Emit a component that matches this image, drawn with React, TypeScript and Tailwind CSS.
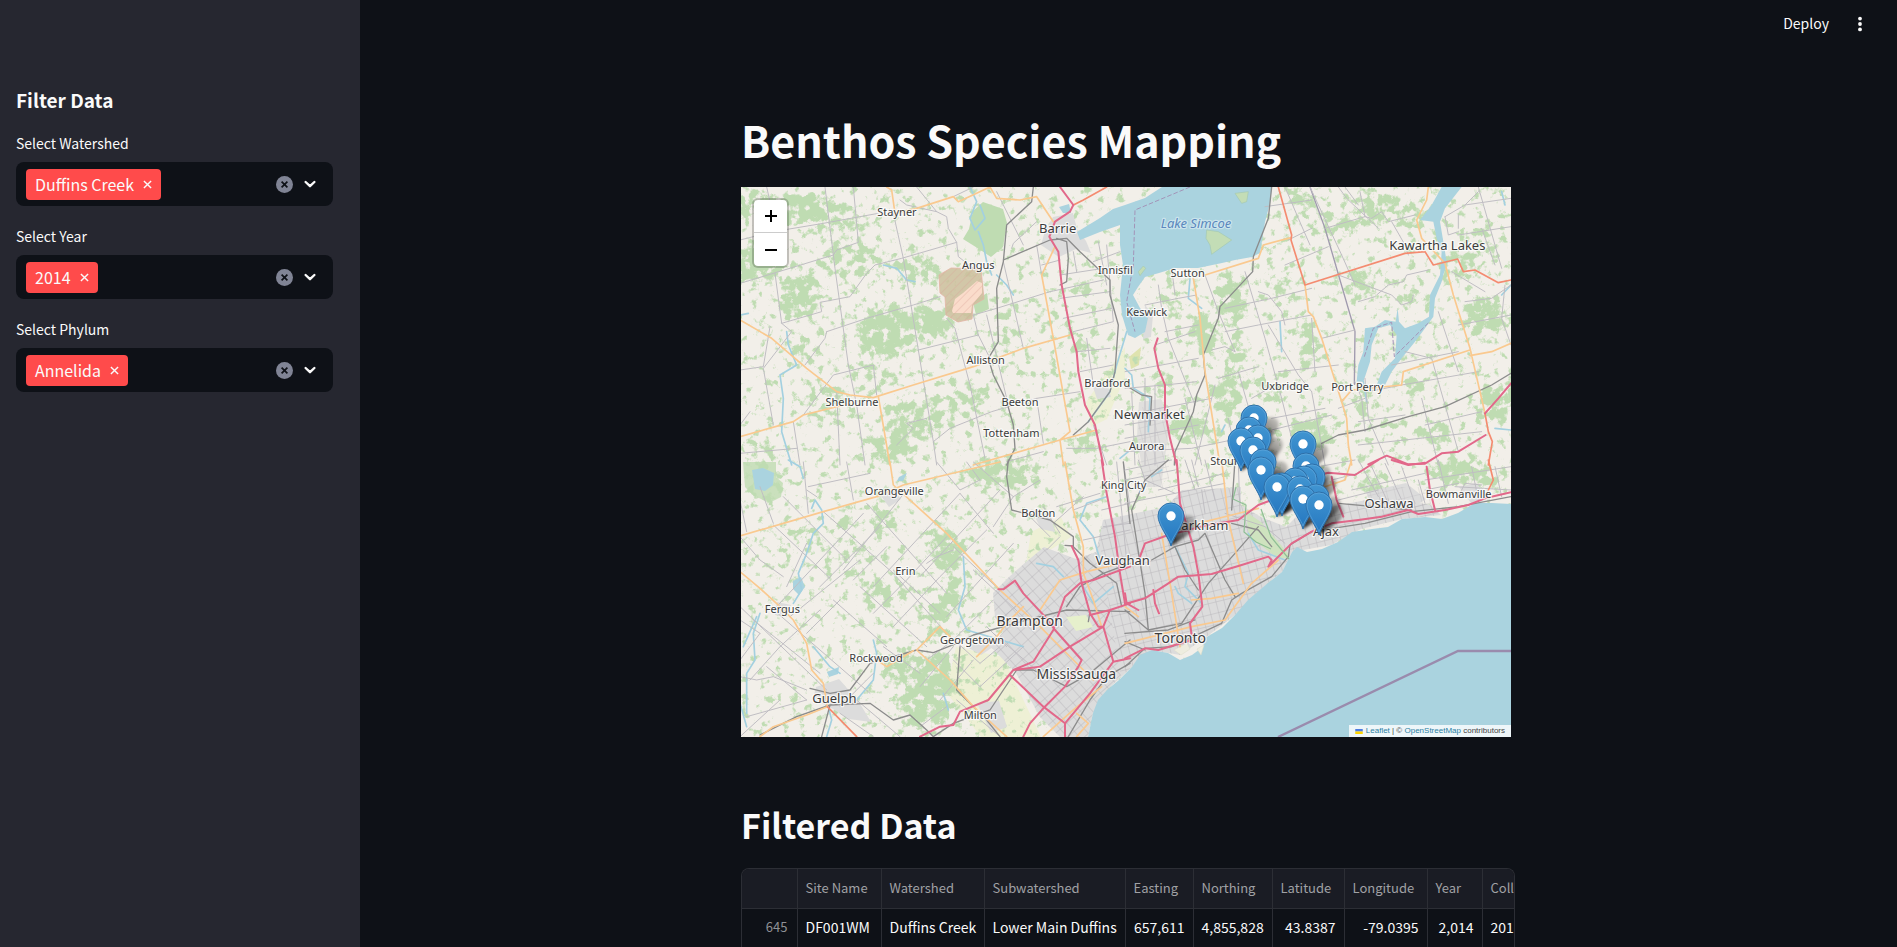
import React from "react";

/* ---------- Map data: four tiles, each drawn on a 1170 x 840 grid ---------- */

type TileId = "nw" | "ne" | "sw" | "se";

const tileOrigin: Record<TileId, [number, number]> = {
  nw: [-1, -2],
  ne: [384, -2],
  sw: [-1, 273],
  se: [384, 273],
};

type Roads = { minor: string; primary: string; trunk: string; motorway: string; rail: string; river: string };

const roads: Record<TileId, Roads> = {
  nw: {
    minor:
      "M0 295L110 262 280 210 290 195 355 172 340 6M0 165L100 140 250 115 415 85M255 6L285 250 325 540 350 660 375 840M105 265L125 415 155 440 70 550 100 720M125 415L245 380 240 352 330 335 380 265 405 240 485 220 650 172 625 130 620 95 590 80 530 6M460 85L490 220 535 495 580 770 590 840M260 440L380 400 520 360 600 335M260 440L255 460 195 540M650 172L655 215 700 250M535 495L715 450M620 400L645 430 690 600 735 820M700 390L715 450 760 540M700 390L770 370 930 320 1090 285M790 230L850 490M770 20L850 180M815 190L820 175 890 110M580 770L630 730 755 680 890 640 1020 620M890 640L910 775M1100 180L1120 410 1000 440M1075 170L1100 300M960 270L1090 250M190 690L280 570 400 540 410 630M0 555L70 545 90 425M80 6L90 50M160 710L180 840M0 805L170 790M1010 500L1110 490M1020 560L1120 540M905 240L960 225M890 180L905 270M470 780L520 730 500 715 560 700M30 680L0 720M290 620L300 840M1040 460L1060 600M980 790L1070 790 1170 770M1060 720L1100 840M740 390L800 640M480 45L500 60 590 80M800 830L910 800M700 6L640 35M1140 200L1060 230M1000 200L1010 260M960 340L1110 320M970 400L1115 370",
    primary:
      "M440 6L455 15 465 85 530 70 640 35 655 50 750 6 770 40 840 45 890 35 940 110M945 185L905 270 940 460 990 740 960 765 970 840M0 405L95 460 200 550 290 620 330 630 400 638 520 600 700 545 850 490 990 450M0 755L160 710 190 690 330 655M415 635L450 840M1070 735L960 765 700 840",
    trunk: "M1000 60L1030 45 1100 6",
    motorway:
      "M960 6L1000 60 990 80 945 110 928 155 955 200 965 300 990 430 1010 500 1015 560 1035 660 1065 720 1090 840",
    rail:
      "M880 6L875 50 800 120 790 230 770 310 775 470 745 520 760 570 800 650 820 720 825 790 800 840M790 225L930 165 980 160 1020 200 1110 285 1110 330 1135 420 1125 560 1110 620 1045 710 1000 750M950 160L980 170 985 220 980 290 960 300",
    river:
      "M690 6L710 50 690 100 705 135 735 100 720 60M715 140L730 180 740 230 755 270M430 240L470 250 500 285 525 290M140 440L145 480 170 540 120 570 130 640 125 740 155 840M0 390L25 385M1160 440L1130 540 1110 620 1045 710M1165 800L1140 820M770 270L800 300 820 330",
  },
  ne: {
    minor:
      "M555 6L650 210 690 300M480 240L610 185M490 165L560 130M600 130L720 95M720 95L705 20M700 60L660 6M720 95L740 100 770 80 790 110 870 90M420 65L560 45M640 270L800 330 830 360 860 350 865 330M755 330L790 300 835 290 845 270 910 255M750 335L700 350M100 300L110 370 130 460 210 660M140 250L150 330M60 360L160 340 215 330M240 270L280 380 330 500M360 260L420 460 470 640 520 840M300 370L440 340 560 310M300 440L400 420 560 390M260 495L300 485 330 500M590 460L690 435M400 320L430 330 470 380 480 420M430 420L520 570 560 620M460 560L640 540M380 640L450 600M120 440L220 420M90 480L210 440M280 580L400 545M640 670L720 640M720 580L730 700 790 840M690 590L710 640 720 740M840 500L920 520 1000 800M940 380L1000 560M890 640L940 840M960 95L1020 60 1060 20M960 95L970 150 1000 140M1060 6L1130 250M1000 150L1158 125M1000 130L1000 90M1158 300L1100 340 1020 350M1000 420L1158 390M1020 60L1158 40M1140 300L1130 400 1158 480M800 540L1000 500M830 600L1060 560M730 620L830 600M440 700L600 670M420 740L620 690M560 620L600 840M900 720L1070 680M700 780L1070 740M0 560L220 520M0 610L120 600 215 590M0 690L260 640M0 760L220 720M0 800L200 790 440 740M60 580L60 840M20 620L30 840M90 600L90 840M180 640L230 840M0 720L120 700M310 700L340 840M340 560L380 700M210 840L270 600M560 400L570 560M800 110L840 180 850 210M640 6L665 40 760 130M480 6L520 100 555 180M1070 130L1110 240M980 260L1080 320M700 710L840 690",
    primary:
      "M240 270L400 220 415 180 498 158M540 300L550 380 565 395 590 460 650 650 665 700 670 780 680 840M650 650L680 615 830 600 835 560 1035 495M1035 512L1100 500 1158 475M205 280L225 400 240 560 285 840M910 6L905 45 875 105 890 160 960 235 985 330 1035 490 1080 685",
    trunk:
      "M460 6L500 150 498 165 540 300 840 205 900 200 925 240 998 222 1015 260 1050 255 1120 293 1158 285M1080 685L1090 740 1102 770 1090 840",
    motorway:
      "M98 460L88 490 100 550 120 600 120 680 135 760 155 840M730 838L785 812 850 838 900 836 950 805 1000 800 1082 750M1158 595L1120 640 1080 685",
    rail:
      "M440 6L430 100 385 215 383 260 285 365 280 400 235 510 240 570 215 630 205 680 150 800 148 840M1158 565L1100 600 960 665 850 695 720 735 640 750 590 775M0 600L50 630 80 635 75 720",
    river:
      "M195 280L190 340 230 370M0 550L20 570 25 610 75 640 70 740M715 590L725 650M465 410L470 500M1158 300L1130 330M1130 20L1140 60M1110 730L1158 735M300 720L290 740",
  },
  sw: {
    minor:
      "M190 6L205 160M340 120L320 6M100 195L270 355M205 80L390 40M250 155L460 340 620 520 720 610M130 110L320 300M0 230L60 300 130 350M380 130L620 400M500 90L310 330M590 6L660 90 720 60M660 100L400 380M660 100L760 220M780 90L540 350M740 210L600 350 460 500M620 230L500 360 400 460M820 250L620 470M640 260L800 410M700 330L860 480M760 420L640 540 560 600M370 160L240 300 110 440M200 250L140 380M0 440L260 690M40 480L240 640M90 440L390 700M150 470L360 300M200 520L300 420M280 420L440 560M360 380L560 560M460 330L600 460M240 380L420 200M440 260L340 360M120 560L240 450M0 480L60 520M60 520L0 600M120 560L30 660M80 620L200 720M0 650L50 660 100 650 200 690M20 770L200 720M120 720L0 830M300 760L400 830M350 720L480 830M400 640L300 740M430 560L540 640M640 560L540 680M640 600L720 680M620 740L540 800M700 600L600 720M650 720L780 830M720 610L780 560M780 480L870 400M740 500L800 560M920 270L960 230M910 140L960 220M860 160L930 230M940 190L1030 110M950 140L1080 100M700 6L820 110 760 200M820 110L900 60M1000 150L1080 120M850 560L720 680M760 520L900 640M1085 150L1170 130M1090 200L1170 190M1030 240L1170 210M1130 6L1160 300M1150 6L1170 140M560 310L590 290 640 270M60 80L100 190M720 60L680 6M0 120L20 215M200 90L230 110",
    primary:
      "M0 335L60 385 120 440 160 480 200 550 215 630 250 670 262 740 200 765 100 800 60 830M0 228L250 155 410 110 490 75 780 6M450 6L460 75 620 220 780 390 900 500 1000 600 1060 660M530 570L600 500 630 530M530 570L630 660 700 740 800 830M520 572L440 620 410 600M975 6L1000 150 1030 260 1030 340 1060 420 1085 500M900 450L960 360 1040 335 1140 310M850 440L800 490 770 530 710 590M1085 680L1000 750 910 830M1010 760L1045 790 1010 830",
    trunk: "M262 740L350 830",
    motorway:
      "M775 388L790 388 825 362 850 400 915 470 945 510 1025 600 1015 620 975 680 910 745 870 790 850 830M540 830L600 800 640 795 660 755 745 720 820 630 880 605 940 510 960 450 975 410 1020 370 1060 360 1170 320M820 630L900 620 990 560 1090 500 1110 450 1170 430M1085 0L1100 100 1125 230 1140 340 1155 430M995 258L1015 300 1025 370 1050 460 1075 500 1090 500 1120 605 1050 700 975 790 975 830M810 645L910 740 975 790M1120 605L1170 595M1050 465L1110 450",
    rail:
      "M805 0L800 50 815 150 930 180 1000 230 1000 260 1050 310 1130 370 1145 440M975 256L1000 258M210 685L270 700 330 690 390 610 530 570 580 578 650 550 700 525 860 480 980 450 1170 455M660 560L650 690 700 740 740 780 780 830M60 825L170 770 270 735 245 830M270 735L390 730 460 780 510 765 560 810 580 830M980 440L1020 380 1090 340 1170 310M580 830L640 790 750 750 830 630 880 630 980 680 1050 640 1170 540M985 830L1050 720 1100 650 1170 610M1150 6L1170 190M1045 485L1050 455",
    river:
      "M145 0L180 20 190 55M215 145L225 120 245 150 250 190 220 220 200 280 175 340 185 390 160 430M60 460L40 520 45 600 20 640 20 760M50 470L10 560M220 560L270 620 300 640M400 540L410 580 400 660 350 720M670 290L675 380 655 450 680 510 850 560M1100 110L1040 130 1020 180 1060 230 1080 300M265 740L275 780 260 830M610 700L625 750M0 730L20 800M890 310L940 320 970 350M1030 380L1060 430 1120 380",
  },
  se: {
    minor:
      "M0 60L150 30M0 130L150 100 300 70M40 0L60 60 150 100M180 0L210 90M200 0L220 80M240 0L270 120M230 90L240 160M300 160L420 200 480 250M100 90L300 40M0 30L140 0M340 10L345 160M580 20L690 0M620 60L700 40M700 0L760 110M740 20L790 130M780 10L830 120M830 20L870 130M880 60L900 130M680 90L900 40M640 120L760 90M900 60L1158 20M940 0L970 130M990 80L1158 90M1000 110L1020 70 1070 75M600 100L620 170M1040 20L1060 120M1110 20L1130 110M900 90L1000 70",
    primary:
      "M0 550L200 500 300 480 380 370 460 300M110 220L140 400 165 560M290 0L310 180 355 370M200 420L260 415 340 400M180 200L320 165 400 145M680 0L660 60 600 80M0 440L40 470",
    trunk: "M1090 0L1105 60 1090 90",
    motorway:
      "M0 432L60 415 130 370 160 350 260 342 350 315 430 290 440 300 430 320 500 250 560 215 620 190 700 180 770 170 850 150 880 162 960 150 1030 135 1080 115 1158 97M155 0L165 130 205 260 220 340 232 440 195 490 200 525M0 595L60 565 100 570 200 540M45 290L60 250 130 225 250 195 340 180 400 135 440 120 560 50 610 38 690 45 760 0M620 50L635 120 655 170M905 20L915 90 930 150M85 390L90 430 102 460M800 0L850 15 900 8M0 400L5 430 40 450",
    rail:
      "M0 450L70 510 170 490 250 370 330 280 400 200M0 620L60 565 140 560 290 490 320 420 350 400 440 350 490 290 495 255 560 215 720 190 860 155 1000 140 1158 110M80 300L150 260 220 240 240 220 300 360 330 410M320 190L400 210 440 260M130 0L60 60 20 150 60 400 70 510M0 520L130 510 210 480M640 130L860 150M150 260L180 330 220 390M0 545L60 570M330 0L320 150",
    river: "M150 260L190 340 180 380 230 430M150 380L160 400 200 430M370 220L400 270 480 300M80 50L110 30M520 30L560 100",
  },
};

const lakeOntario =
  "M347 550L352 526 357 513 366 503 378 493 391 480 399 468 411 463 427 466 439 473 451 468 462 460 464 451 481 441 494 428 507 413 527 396 541 385 551 365 556 360 566 365 581 362 597 355 611 345 631 342 647 340 661 332 684 330 701 332 717 326 734 316 751 316 770 317V550Z";

const lakeSimcoe =
  "M531 0L529 16 524 35 519 66 511 70 494 73 481 76 457 81 434 81 418 86 404 90 397 100 392 108 399 121 407 131 404 145 394 151 387 148 381 128 379 108 382 78 379 58 379 38 359 45 339 53 336 45 359 31 372 22 384 18 404 11 421 0Z";

const urban =
  "M303 360L285 375 268 390 252 406 254 430 262 445 250 460 275 486 299 530 319 550H347L352 526 366 503 391 480 411 463 439 468 464 451 494 428 527 396 541 385 551 365 590 358 620 342 661 332 700 328 690 318 640 310 600 318 560 325 545 340 520 330 500 318 500 300 470 302 441 303 425 320 400 325 362 333 355 365 335 372Z";

/* Woodland density: cx, cy, rx, ry, weight */
const woods: [number, number, number, number, number][] = [
  [20, 20, 36, 14, 0.8], [66, 22, 34, 16, 0.9], [14, 78, 30, 18, 0.9], [58, 108, 20, 24, 0.9],
  [110, 72, 38, 16, 0.6], [100, 38, 26, 14, 0.6], [145, 145, 30, 26, 1], [192, 134, 24, 16, 1],
  [175, 82, 24, 14, 0.7], [176, 232, 34, 22, 0.7], [150, 262, 26, 16, 0.8], [90, 215, 26, 18, 0.5],
  [228, 214, 20, 14, 0.7], [266, 150, 8, 20, 0.7], [340, 158, 10, 12, 0.9], [340, 102, 9, 6, 1],
  [343, 256, 12, 8, 1], [270, 120, 12, 10, 0.6], [130, 190, 24, 12, 0.5], [20, 265, 14, 20, 0.5],
  [490, 112, 14, 22, 1], [462, 146, 14, 22, 0.9], [494, 165, 8, 26, 0.9], [567, 158, 8, 26, 1],
  [620, 98, 16, 14, 0.8], [637, 22, 28, 14, 0.8], [560, 14, 16, 9, 0.9], [592, 38, 26, 12, 0.6],
  [675, 30, 18, 14, 0.5], [744, 130, 22, 18, 0.9], [717, 80, 18, 16, 0.6], [667, 110, 16, 10, 0.6],
  [674, 198, 14, 10, 0.8], [624, 218, 10, 10, 1], [450, 240, 26, 12, 1], [486, 208, 16, 20, 0.9],
  [572, 246, 22, 14, 1], [754, 216, 18, 18, 1], [694, 245, 18, 12, 0.8], [430, 115, 12, 12, 0.6],
  [260, 286, 36, 14, 1], [206, 363, 18, 22, 0.9], [212, 406, 12, 18, 1], [196, 433, 10, 20, 1],
  [199, 490, 18, 26, 1], [165, 482, 22, 16, 0.8], [184, 516, 26, 24, 1], [142, 333, 14, 18, 0.7],
  [102, 333, 10, 10, 0.8], [139, 406, 28, 12, 0.7], [110, 370, 24, 16, 0.4], [60, 350, 30, 20, 0.3],
  [717, 284, 30, 12, 1], [632, 296, 18, 10, 0.8], [740, 55, 20, 24, 0.4], [540, 100, 16, 20, 0.4],
  [524, 200, 22, 12, 0.5], [640, 240, 14, 8, 0.5], [740, 290, 26, 12, 0.5], [60, 165, 20, 14, 0.5],
  [22, 298, 24, 14, 0.4], [310, 130, 20, 14, 0.3], [420, 200, 12, 14, 0.5],
];

type Label = { t: TileId; x: number; y: number; s: string; size?: number };

const labels: Label[] = [
  { t: "nw", x: 471, y: 93, s: "Stayner" },
  { t: "nw", x: 953, y: 145, s: "Barrie", size: 13 },
  { t: "nw", x: 715, y: 252, s: "Angus" },
  { t: "nw", x: 1126, y: 266, s: "Innisfil" },
  { t: "nw", x: 737, y: 537, s: "Alliston" },
  { t: "nw", x: 336, y: 663, s: "Shelburne" },
  { t: "nw", x: 840, y: 662, s: "Beeton" },
  { t: "nw", x: 1102, y: 605, s: "Bradford" },
  { t: "nw", x: 814, y: 755, s: "Tottenham" },
  { t: "ne", x: 188, y: 275, s: "Sutton" },
  { t: "ne", x: 65, y: 393, s: "Keswick" },
  { t: "ne", x: 937, y: 195, s: "Kawartha Lakes", size: 13 },
  { t: "ne", x: 480, y: 614, s: "Uxbridge" },
  { t: "ne", x: 697, y: 619, s: "Port Perry" },
  { t: "ne", x: 73, y: 702, s: "Newmarket", size: 13 },
  { t: "ne", x: 65, y: 794, s: "Aurora" },
  { t: "ne", x: 333, y: 839, s: "Stouffville" },
  { t: "sw", x: 463, y: 104, s: "Orangeville" },
  { t: "sw", x: 895, y: 170, s: "Bolton" },
  { t: "sw", x: 1151, y: 87, s: "King City" },
  { t: "sw", x: 496, y: 344, s: "Erin" },
  { t: "sw", x: 127, y: 460, s: "Fergus" },
  { t: "sw", x: 869, y: 498, s: "Brampton", size: 14 },
  { t: "sw", x: 696, y: 553, s: "Georgetown" },
  { t: "sw", x: 408, y: 605, s: "Rockwood" },
  { t: "sw", x: 283, y: 729, s: "Guelph", size: 13 },
  { t: "sw", x: 1009, y: 657, s: "Mississauga", size: 14 },
  { t: "sw", x: 721, y: 778, s: "Milton" },
  { t: "se", x: -7, y: 316, s: "Vaughan", size: 13 },
  { t: "se", x: 222, y: 211, s: "Markham", size: 13 },
  { t: "se", x: 166, y: 550, s: "Toronto", size: 14 },
  { t: "se", x: 792, y: 143, s: "Oshawa", size: 13 },
  { t: "se", x: 603, y: 227, s: "Ajax", size: 13 },
  { t: "se", x: 1001, y: 114, s: "Bowmanville" },
];

/* Pin hole centres, drawn north to south */
const pins: [number, number][] = [
  [513, 231], [508, 243], [517, 251], [500, 254], [562, 257], [512, 263], [522, 275], [565, 279],
  [520, 283], [571, 290], [563, 292], [554, 294], [541, 299], [536, 300], [559, 302], [575, 310],
  [562, 312], [578, 318], [430, 329],
];

const layers: { key: keyof Roads; color: string; width: number }[] = [
  { key: "river", color: "#a3d0e0", width: 5 },
  { key: "minor", color: "#c0bec3", width: 3 },
  { key: "rail", color: "#8c8c8c", width: 4 },
  { key: "primary", color: "#fac98f", width: 5 },
  { key: "trunk", color: "#f48b70", width: 5 },
  { key: "motorway", color: "#e2688a", width: 6 },
];

function tileTransform(id: TileId) {
  const [x, y] = tileOrigin[id];
  return `translate(${x} ${y}) scale(0.33333)`;
}

function MapDrawing() {
  const ids: TileId[] = ["nw", "ne", "sw", "se"];
  return (
    <svg viewBox="0 0 770 550" className="block w-full" role="img" aria-label="Map of survey sites">
      <defs>
        <filter id="wood" x="0" y="0" width="770" height="550" filterUnits="userSpaceOnUse" colorInterpolationFilters="sRGB">
          <feGaussianBlur in="SourceGraphic" stdDeviation="5" result="density" />
          <feTurbulence type="fractalNoise" baseFrequency="0.12" numOctaves="4" seed="7" result="noise" />
          <feComposite in="density" in2="noise" operator="arithmetic" k1="0" k2="0.32" k3="1" k4="0" result="sum" />
          <feComponentTransfer in="sum" result="cut">
            <feFuncA type="linear" slope="7" intercept="-4.2" />
          </feComponentTransfer>
          <feFlood floodColor="#bfdcb2" />
          <feComposite in2="cut" operator="in" />
        </filter>
        <filter id="shade" x="-50%" y="-50%" width="200%" height="200%">
          <feGaussianBlur stdDeviation="1.8" />
        </filter>
        <pattern id="streets" width="8" height="11" patternUnits="userSpaceOnUse" patternTransform="rotate(-14)">
          <path d="M0 0H8M0 0V11" stroke="#b2b0b4" strokeWidth="0.8" fill="none" />
        </pattern>
        <pattern id="streetsWest" width="9" height="11" patternUnits="userSpaceOnUse" patternTransform="rotate(-42)">
          <path d="M0 0H9M0 0V11" stroke="#b2b0b4" strokeWidth="0.8" fill="none" />
        </pattern>
        <pattern id="hatch" width="6" height="6" patternUnits="userSpaceOnUse" patternTransform="rotate(45)">
          <path d="M0 0V6" stroke="#d9a295" strokeWidth="1.5" opacity="0.45" />
        </pattern>
        <linearGradient id="pinFill" x1="0" y1="0" x2="0" y2="1">
          <stop offset="0" stopColor="#4195d1" />
          <stop offset="1" stopColor="#2476bf" />
        </linearGradient>
        <linearGradient id="shadowFill" x1="0" y1="1" x2="0.8" y2="0">
          <stop offset="0" stopColor="#000" stopOpacity="0.9" />
          <stop offset="0.5" stopColor="#000" stopOpacity="0.5" />
          <stop offset="1" stopColor="#000" stopOpacity="0.2" />
        </linearGradient>
        <clipPath id="urbanClip">
          <path d={urban} />
        </clipPath>
        <g id="pin">
          <path
            d="M0 30C-2 22-13 9-13 0A13 13 0 0 1 13 0C13 9 2 22 0 30Z"
            fill="url(#pinFill)"
            stroke="#2e6fa8"
            strokeWidth="1"
          />
          <path d="M0 27C-2 20-12 9-12 0A12 12 0 0 1 12 0C12 9 2 20 0 27Z" fill="none" stroke="#5fa8dc" strokeWidth="0.9" opacity="0.7" />
          <circle r="4.7" fill="#fff" />
        </g>
        <path id="pinShadow" d="M0 0C1-10 4-24 14-30C22-33 28-26 23-18C18-10 6-4 0 0Z" fill="url(#shadowFill)" />
      </defs>

      <rect width="770" height="550" fill="#f2efe9" />

      {/* Farmland and parkland tints */}
      <g fill="#eef0d5">
        <path d="M215 460L262 470 300 550H240L205 505Z" />
        <path d="M285 378L330 350 320 330 290 345Z" />
        <path d="M345 215L384 160 384 190 366 232 350 240Z" />
        <path d="M388 170L400 160 398 178 390 182Z" fill="#dfe3af" />
      </g>

      <g filter="url(#wood)">
        <rect width="770" height="550" fill="#000" opacity="0.01" />
        {woods.map(([cx, cy, rx, ry, w], i) => (
          <ellipse key={i} cx={cx} cy={cy} rx={rx} ry={ry} fillOpacity={w} />
        ))}
      </g>
      <g fill="#bfdcb2">
        <path d="M232 24L242 15 262 22 266 36 262 60 250 70 238 62 222 52 228 42Z" />
        <path d="M232 115L246 106 248 122 235 128Z" />
        <path d="M2 275H35V290L42 296 40 310 28 316 12 308 4 300Z" fillOpacity="0.8" />
      </g>
      <path d="M198 88L210 81 240 82 243 112 232 118 231 132 217 135 205 128 204 110 199 106Z" fill="#cdbf9c" fillOpacity="0.85" />
      <path d="M211 124L214 112 222 106 236 94 241 96 241 106 231 118 230 126 212 126Z" fill="#fadccb" />
      <path d="M198 88L210 81 240 82 243 112 232 118 231 132 217 135 205 128 204 110 199 106Z" fill="url(#hatch)" stroke="#e3b5a6" strokeWidth="0.8" />

      {/* Built-up areas */}
      <g fill="#dcdcdc">
        <path d={urban} />
        <path d="M312 30L332 26 336 42 345 54 350 66 335 62 318 70 300 58 304 44Z" />
        <path d="M398 215L420 212 428 240 420 300 404 300 396 250Z" fill="#e0dfdd" />
        <path d="M404 118L412 128 410 150 402 152Z" />
        <path d="M352 200L366 196 370 210 356 212Z" />
        <path d="M75 500L98 492 118 515 130 535 108 532 92 522 72 512Z" />
        <path d="M138 306L152 302 160 312 148 320Z" />
        <path d="M226 460L244 450 252 460 240 468Z" />
        <path d="M236 516L258 514 266 540 250 546Z" />
        <path d="M625 305L665 296 685 312 664 326 632 322Z" />
        <path d="M718 300L735 296 748 310 730 316Z" />
        <path d="M290 322L310 330 314 345 300 342Z" />
        <path d="M36 415L50 418 46 430 34 428Z" />
      </g>
      <g clipPath="url(#urbanClip)">
        <path d="M200 300H350L370 430 390 550H200Z" fill="url(#streetsWest)" />
        <path d="M350 300H770V550H390L370 430Z" fill="url(#streets)" />
      </g>
      <path d="M398 220H428V300H396ZM625 300H690V325H625Z" fill="url(#streets)" opacity="0.6" />
      <g fill="#cfe3bf">
        <path d="M505 325L520 335 540 358 550 370 538 372 522 360 508 350Z" />
        <path d="M325 430L345 428 352 440 335 444Z" fill="#e6f0cc" />
      </g>

      {/* Water */}
      <g fill="#aad3df">
        <path d={lakeOntario} />
        <path d={lakeSimcoe} />
        <path d="M11 283L22 281 33 286 32 298 24 304 14 302Z" />
        <path d="M52 394L60 390 64 400 58 408 52 402Z" />
        <path d="M86 485L98 480 97 487 88 490Z" />
        <path d="M158 290L166 286 162 294 156 294Z" />
        <path d="M318 20L328 17 330 26 322 26Z" />
      </g>
      <g transform={tileTransform("ne")}>
        <path
          fill="#aad3df"
          d="M720 430L750 425 780 405 812 410 818 370 822 410 840 430 880 415 912 395 915 330 945 270 950 200 935 160 925 110 885 105 920 60 950 6H1010L960 70 945 110 955 170 965 230 950 290 930 340 925 395 900 430 870 470 830 520 800 560 780 600 755 600 770 560 810 520 815 450 795 420 760 430 740 480 735 530 715 590 695 590 700 540 715 500Z"
        />
        <path fill="#c3ddb6" stroke="#a5c9b0" strokeWidth="2" d="M245 135L280 140 320 165 285 190 260 208 255 180 243 160ZM330 25L370 20 365 50 350 55ZM40 260L55 243 62 250 45 272Z" />
        <path fill="none" stroke="#a394b8" strokeWidth="3" strokeDasharray="14 6" d="M195 6L30 75 25 240 5 350 30 440M718 515L745 430 800 412 808 515 912 412" />
        <path fill="none" stroke="#a09aae" strokeWidth="4" d="M555 6L600 130 690 440 688 600" />
      </g>
      <g fill="#eeeddf" stroke="#dcdcc8" strokeWidth="0.5">
        <path d="M433 463L446 456 449 462 440 468ZM456 462L463 458 460 468Z" />
      </g>

      {ids.map((id) => (
        <g key={id} transform={tileTransform(id)} fill="none" strokeLinejoin="round" strokeLinecap="round">
          {layers.map((l) => (
            <path key={l.key} d={roads[id][l.key]} stroke={l.color} strokeWidth={l.width} />
          ))}
        </g>
      ))}

      <path d="M537 550L717 464H770" fill="none" stroke="#9a8bad" strokeWidth="2.4" />
      <path d="M495 300L492 312 505 318 503 345 515 355 530 362M520 322L530 350 548 372" fill="none" stroke="#8fbf95" strokeWidth="1.2" />

      {/* Place names */}
      <g
        fontFamily='"Noto Sans", sans-serif'
        textAnchor="middle"
        fill="#3c3c3c"
        stroke="#fff"
        strokeOpacity="0.75"
        strokeWidth="2.4"
        strokeLinejoin="round"
        paintOrder="stroke"
      >
        {labels.map((l) => {
          const [ox, oy] = tileOrigin[l.t];
          return (
            <text key={l.s} x={ox + l.x / 3} y={oy + l.y / 3} fontSize={l.size ?? 11}>
              {l.s}
            </text>
          );
        })}
        <text x="455" y="41" fontSize="13" fontStyle="italic" fill="#5a87bd" strokeOpacity="0.4">
          Lake Simcoe
        </text>
      </g>

      {/* Survey sites */}
      <g filter="url(#shade)">
        {pins.map(([x, y], i) => (
          <use key={i} href="#pinShadow" x={x} y={y + 30} />
        ))}
      </g>
      {pins.map(([x, y], i) => (
        <use key={i} href="#pin" x={x} y={y} />
      ))}
    </svg>
  );
}

function SiteMap() {
  return (
    <div className="relative w-full max-w-[770px] overflow-hidden">
      <MapDrawing />
      <div className="absolute left-[11px] top-[11px] flex w-[37px] flex-col overflow-hidden rounded-md border-2 border-black/20 bg-white bg-clip-padding text-black">
        <button aria-label="Zoom in" className="flex h-[33px] items-center justify-center border-b border-[#ccc]">
          <svg viewBox="0 0 14 14" className="size-[14px]" stroke="currentColor" strokeWidth="2">
            <path d="M1 7h12M7 1v12" />
          </svg>
        </button>
        <button aria-label="Zoom out" className="flex h-[33px] items-center justify-center">
          <svg viewBox="0 0 14 14" className="size-[14px]" stroke="currentColor" strokeWidth="2">
            <path d="M1 7h12" />
          </svg>
        </button>
      </div>
      <div className="absolute bottom-0 right-0 flex h-3 items-center whitespace-pre bg-white/80 px-[6px] font-['Liberation_Sans',sans-serif] text-[8px] text-[#444]">
        <svg viewBox="0 0 12 8" className="mr-[3px] h-[5px] w-2">
          <path fill="#4C7BE1" d="M0 0h12v4H0z" />
          <path fill="#FFD500" d="M0 4h12v4H0z" />
        </svg>
        <a href="#leaflet" className="text-[#2b7fa3]">Leaflet</a>
        {" | © "}
        <a href="#osm" className="text-[#2b7fa3]">OpenStreetMap</a>
        {" contributors"}
      </div>
    </div>
  );
}

function MultiSelect({ id, label, value }: { id: string; label: string; value: string }) {
  return (
    <div>
      <label htmlFor={id} className="block h-7 text-sm leading-[18px]">
        {label}
      </label>
      <div className="flex h-11 items-center rounded-lg bg-[#0e1117] pl-[10px] pr-[14px]">
        <span className="flex h-[31px] items-center rounded-[4px] bg-[#ff4b4b] px-[9px] text-base leading-none">
          {value}
          <button aria-label={`Remove ${value}`} className="ml-[9px]">
            <svg viewBox="0 0 10 10" className="size-[9px]" stroke="currentColor" strokeWidth="1.6">
              <path d="M1 1l8 8M9 1l-8 8" />
            </svg>
          </button>
        </span>
        <input id={id} className="h-full min-w-0 flex-1 bg-transparent outline-none" />
        <button aria-label={`Clear ${label}`}>
          <svg viewBox="0 0 17 17" className="size-[17px]">
            <circle cx="8.5" cy="8.5" r="8.5" fill="#808495" />
            <path d="M5.6 5.6l5.8 5.8M11.4 5.6l-5.8 5.8" stroke="#0e1117" strokeWidth="1.7" />
          </svg>
        </button>
        <button aria-label={`Open ${label}`} className="ml-2">
          <svg viewBox="0 0 18 18" className="size-[18px]" fill="none" stroke="currentColor" strokeWidth="2.4" strokeLinecap="round" strokeLinejoin="round">
            <path d="M4.6 7l4.4 4.2L13.4 7" />
          </svg>
        </button>
      </div>
    </div>
  );
}

const columns: { head: string; value: string; width: string; num?: boolean }[] = [
  { head: "Site Name", value: "DF001WM", width: "w-[84px]" },
  { head: "Watershed", value: "Duffins Creek", width: "w-[103px]" },
  { head: "Subwatershed", value: "Lower Main Duffins", width: "w-[141px]" },
  { head: "Easting", value: "657,611", width: "w-[68px]", num: true },
  { head: "Northing", value: "4,855,828", width: "w-[79px]", num: true },
  { head: "Latitude", value: "43.8387", width: "w-[72px]", num: true },
  { head: "Longitude", value: "-79.0395", width: "w-[83px]", num: true },
  { head: "Year", value: "2,014", width: "w-[55px]", num: true },
  { head: "Coll", value: "201", width: "w-[33px]" },
];

function DataTable() {
  return (
    <div className="max-w-[774px] overflow-hidden rounded-t-lg border-x border-t border-[#2c2e35]">
      <table className="w-full table-fixed border-collapse whitespace-nowrap leading-none">
        <thead>
          <tr className="h-[39px] bg-[#1a1c24] text-left text-[13px] text-[#a0a1a5]">
            <th aria-label="Index" className="w-[55px] border-b border-r border-[#2c2e35]" />
            {columns.map((c) => (
              <th key={c.head} className={`${c.width} border-b border-r border-[#2c2e35] px-2 pb-[2px] font-normal last:border-r-0`}>
                {c.head}
              </th>
            ))}
          </tr>
        </thead>
        <tbody>
          <tr className="h-[39px] text-sm leading-none">
            <td className="border-b border-r border-[#2c2e35] px-[9px] pb-[2px] text-right text-[13px] text-[#8f9095]">645</td>
            {columns.map((c) => (
              <td
                key={c.head}
                className={`border-b border-r border-[#2c2e35] px-2 pb-[2px] last:border-r-0 ${c.num ? "text-right" : "text-left"}`}
              >
                {c.value}
              </td>
            ))}
          </tr>
        </tbody>
      </table>
    </div>
  );
}

export default function App() {
  return (
    <div className="flex min-h-screen bg-[#0e1117] font-['Noto_Sans_CJK_SC',sans-serif] text-[#fafafa]">
      <aside className="w-[360px] shrink-0 bg-[#262730] pl-4 pr-[27px] pt-[86px]">
        <h2 className="mb-5 text-[19px] font-bold leading-7">Filter Data</h2>
        <div className="flex flex-col gap-[21px]">
          <MultiSelect id="watershed" label="Select Watershed" value="Duffins Creek" />
          <MultiSelect id="year" label="Select Year" value="2014" />
          <MultiSelect id="phylum" label="Select Phylum" value="Annelida" />
        </div>
      </aside>
      <div className="min-w-0 flex-1">
        <header className="flex h-12 items-center justify-end gap-[22px] pr-[28px]">
          <button className="pb-[2px] text-sm">Deploy</button>
          <button aria-label="Menu">
            <svg viewBox="0 0 18 18" className="size-[18px]" fill="currentColor">
              <circle cx="9" cy="3.6" r="1.9" />
              <circle cx="9" cy="9" r="1.9" />
              <circle cx="9" cy="14.4" r="1.9" />
            </svg>
          </button>
        </header>
        <main className="mx-auto w-full max-w-[775px] pt-[63px]">
          <h1 className="mb-5 text-[43px] font-bold leading-[56px]">Benthos Species Mapping</h1>
          <SiteMap />
          <h2 className="mb-[19px] mt-16 text-[34px] font-bold leading-[48px]">Filtered Data</h2>
          <DataTable />
        </main>
      </div>
    </div>
  );
}
